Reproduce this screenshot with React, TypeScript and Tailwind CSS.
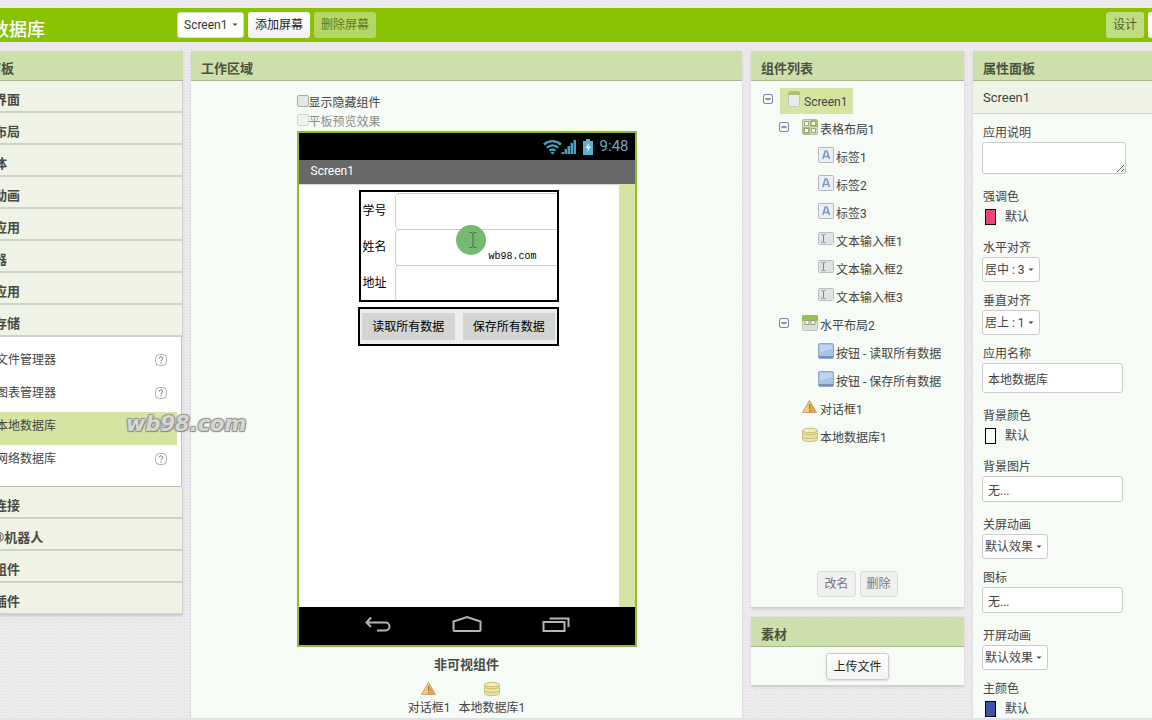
import React, { useState } from "react";

type IconName = "screen" | "table" | "label" | "textbox" | "horizontal" | "button" | "notifier" | "database";

type TreeNode = {
  name: string;
  icon: IconName;
  depth: number;
  branch?: boolean;
};

const TREE: TreeNode[] = [
  { name: "Screen1", icon: "screen", depth: 0, branch: true },
  { name: "表格布局1", icon: "table", depth: 1, branch: true },
  { name: "标签1", icon: "label", depth: 2 },
  { name: "标签2", icon: "label", depth: 2 },
  { name: "标签3", icon: "label", depth: 2 },
  { name: "文本输入框1", icon: "textbox", depth: 2 },
  { name: "文本输入框2", icon: "textbox", depth: 2 },
  { name: "文本输入框3", icon: "textbox", depth: 2 },
  { name: "水平布局2", icon: "horizontal", depth: 1, branch: true },
  { name: "按钮 - 读取所有数据", icon: "button", depth: 2 },
  { name: "按钮 - 保存所有数据", icon: "button", depth: 2 },
  { name: "对话框1", icon: "notifier", depth: 1 },
  { name: "本地数据库1", icon: "database", depth: 1 },
];

const INDENT = ["pl-3", "pl-7", "pl-11"];

const TOP_SECTIONS = ["界面", "布局", "体", "动画", "应用", "器", "应用", "存储"];
const BOTTOM_SECTIONS = ["连接", "®机器人", "组件", "插件"];
const STORAGE_ITEMS = ["文件管理器", "图表管理器", "本地数据库", "网络数据库"];

function ComponentIcon({ name }: { name: IconName }) {
  return (
    <svg className="h-4 w-4 shrink-0" viewBox="0 0 16 16" aria-hidden="true">
      {name === "screen" && (
        <>
          <rect x="2.5" y="0.5" width="11" height="15" rx="1" fill="#e9ebe6" stroke="#c3c8b8" />
          <path d="M2 1.5a1 1 0 0 1 1-1h10a1 1 0 0 1 1 1V4H2z" fill="#a9bf72" />
        </>
      )}
      {name === "table" && (
        <>
          <rect x="0.5" y="0.5" width="15" height="15" rx="1.5" fill="#d5dbc4" stroke="#b0bb93" />
          <path d="M8 1h7v7H8zM1 8h7v7H1z" fill="#a9bd6c" />
          <g fill="#f5f7f0" stroke="#9caa7c">
            <rect x="2.5" y="2.5" width="4" height="4" />
            <rect x="9.5" y="2.5" width="4" height="4" />
            <rect x="2.5" y="9.5" width="4" height="4" />
            <rect x="9.5" y="9.5" width="4" height="4" />
          </g>
        </>
      )}
      {name === "label" && (
        <>
          <rect x="0.5" y="0.5" width="15" height="15" rx="1" fill="#edf1f5" stroke="#b4b7ba" />
          <path d="M4.7 12 7.3 4h1.6l2.5 8M5.7 9.5h4.8" fill="none" stroke="#7d9dc5" strokeWidth="1.7" />
        </>
      )}
      {name === "textbox" && (
        <>
          <rect x="0.5" y="1.5" width="15" height="12" rx="1" fill="#e0e3e4" stroke="#bbbebf" />
          <path d="M3.5 3.5h1.3l.7.6.7-.6h1.3M5.5 4v7M3.5 11.5h1.3l.7-.6.7.6h1.3" fill="none" stroke="#808488" />
        </>
      )}
      {name === "horizontal" && (
        <>
          <rect x="0.5" y="0.5" width="15" height="15" rx="1" fill="#dcdfd9" stroke="#c0c5ba" />
          <path d="M0 1.5A1.5 1.5 0 0 1 1.5 0h13A1.5 1.5 0 0 1 16 1.5V6H0z" fill="#98bd50" />
          <g fill="#f8faf5" stroke="#95a07f">
            <rect x="3" y="5.5" width="4" height="4" />
            <rect x="9" y="5.5" width="4" height="4" />
          </g>
        </>
      )}
      {name === "button" && (
        <>
          <rect x="0.5" y="0.5" width="15" height="15" rx="1.5" fill="#a6c3e9" stroke="#8facd0" />
          <path d="M1 13h14v1.5a.5.5 0 0 1-.5.5h-13a.5.5 0 0 1-.5-.5z" fill="#7590b3" />
          <path d="M2 2h12v4C9 7 5 8 2 10z" fill="#bdd4f2" />
        </>
      )}
      {name === "notifier" && (
        <>
          <path d="M7.5 1.5 14.5 13.5H.5z" fill="#f3ca83" stroke="#cfa268" />
          <path d="M8 2.5 14 13H8z" fill="#e0a54f" />
          <path d="M7.5 5v5M7.5 11v1.5" stroke="#9a7440" />
        </>
      )}
      {name === "database" && (
        <g fill="#ece3a0" stroke="#c8bc78">
          <path d="M.5 10.5v2c0 1.2 3.3 2 7.5 2s7.500-.8 7.500-2v-2z" />
          <path d="M.5 6.5v3c0 1.200 3.300 2 7.500 2s7.500-.8 7.500-2v-3z" />
          <path d="M.5 3.5v2c0 1.300 3.300 2.300 7.500 2.300s7.500-1 7.500-2.300v-2z" />
          <ellipse cx="8" cy="3.5" rx="7.5" ry="2.2" fill="#f4edbb" />
        </g>
      )}
    </svg>
  );
}

function Caret() {
  return (
    <span className="pointer-events-none absolute inset-y-0 right-1.5 flex items-center">
      <svg className="h-1 w-1.5" viewBox="0 0 6 4" aria-hidden="true">
        <path d="M0.5 .5h5L3 3z" fill="#444" />
      </svg>
    </span>
  );
}

function PanelHeader({ children }: { children: React.ReactNode }) {
  return (
    <h2 className="flex h-[30px] items-center border-b border-[#a9b890] bg-[#cddfab] px-2.5 pt-1.5 text-[13px] font-bold text-[#4b5340]">
      {children}
    </h2>
  );
}

function TopBar() {
  return (
    <header className="flex h-[34px] shrink-0 items-center overflow-hidden bg-[#88c200]">
      <h1 className="-ml-[9px] w-[186px] pt-2.5 text-lg font-medium text-white">数据库</h1>
      <div className="flex flex-1 gap-1">
        <div className="relative">
          <select
            aria-label="屏幕"
            className="block h-[26px] w-[67px] appearance-none rounded-[3px] border border-[#d5dfc5] bg-white px-1.5 text-xs text-[#333]"
          >
            <option>Screen1</option>
          </select>
          <Caret />
        </div>
        <button className="h-[26px] rounded-[3px] bg-gradient-to-b from-white to-[#f1f1f1] px-[7px] text-xs text-[#222]">
          添加屏幕
        </button>
        <button disabled className="h-[26px] rounded-[3px] bg-[#b4d765] px-[7px] text-xs text-[#5c7a22]">
          删除屏幕
        </button>
      </div>
      <div className="flex gap-1">
        <button className="h-[26px] rounded-[3px] bg-[#bfdc82] px-[7px] text-xs text-[#4b6420]">设计</button>
        <button aria-label="编程" className="h-[26px] w-1 rounded-l-[3px] bg-white" />
      </div>
    </header>
  );
}

function SectionRow({ title }: { title: string }) {
  return (
    <button className="block h-8 w-full border-r border-b-2 border-[#ced2c8] bg-[#eff3e5] pt-2 text-left text-[13px] font-bold text-[#4a4a46]">
      <span className="-ml-1.5">{title}</span>
    </button>
  );
}

function Palette() {
  const [selected, setSelected] = useState("本地数据库");

  return (
    <section className="-mr-px w-[183px] shrink-0 self-start overflow-hidden shadow-sm">
      <PanelHeader>
        <span className="-ml-[22px]">面板</span>
      </PanelHeader>
      {TOP_SECTIONS.map((title, i) => (
        <SectionRow key={i} title={title} />
      ))}
      <ul className="mr-px border-r border-b border-[#bbbdb8] bg-white pt-[9px] pb-2">
        {STORAGE_ITEMS.map((item) => (
          <li
            key={item}
            className={`mr-1 flex h-[33px] items-center justify-between pr-2.5 pb-1.5 text-xs text-[#444] ${
              item === selected ? "bg-[#d5e4a1]" : ""
            }`}
          >
            <button className="-ml-1" onClick={() => setSelected(item)}>
              {item}
            </button>
            <button aria-label={`${item} 帮助`}>
              <svg className="h-3 w-3" viewBox="0 0 12 12" aria-hidden="true">
                <rect x="0.5" y="0.5" width="11" height="11" rx="4" fill="#fff" stroke="#aaa" />
                <path d="M4.2 4.5c0-2.200 3.500-2.200 3.500 0 0 1.200-1.700 1.200-1.700 2.600M6 8.300v1.200" fill="none" stroke="#666" />
              </svg>
            </button>
          </li>
        ))}
      </ul>
      {BOTTOM_SECTIONS.map((title) => (
        <SectionRow key={title} title={title} />
      ))}
    </section>
  );
}

function StatusBar() {
  return (
    <div className="flex h-[27px] items-center justify-end gap-1.5 bg-black pr-1.5 text-[15px] text-[#6fa9c6]">
      <svg className="h-4 w-[33px]" viewBox="0 0 33 16" aria-hidden="true">
        <g fill="none" stroke="#4a9fc0" strokeWidth="2.4">
          <path d="M1 5.500c5-4.500 12-4.500 17 0" />
          <path d="M3.800 8.700c3.400-3 8-3 11.400 0" />
          <path d="M6.500 11.700c1.800-1.500 4.200-1.500 6 0" />
        </g>
        <path d="m9.500 15.500-2-2.100c1.200-1 2.800-1 4 0z" fill="#4a9fc0" />
        <path d="M18.500 15v-2H21v2zM21.500 15v-5H24v5zM24.500 15V7H27v8zM27.500 15V4H30v11zM30.500 15V1H33v14z" fill="#4a9fc0" />
      </svg>
      <svg className="h-4 w-3" viewBox="0 0 12 16" aria-hidden="true">
        <path d="M4 0h4v2h3v14H1V2h3z" fill="#5ab0d0" />
        <path d="M7 4 3.500 9H6l-1 4 4-5.500H6.500z" fill="#fff" />
      </svg>
      <span>9:48</span>
    </div>
  );
}

function NavigationBar() {
  return (
    <div className="flex h-[38px] items-center justify-between bg-black px-[65px] pb-1">
      <svg className="h-[18px] w-7" viewBox="0 0 28 18" fill="none" stroke="#b5b5b5" strokeWidth="2" aria-hidden="true">
        <path d="M7 2.500 2.500 7.500l4.500 4.500M2.500 7.500h19a4 4 0 0 1 0 8H13" />
      </svg>
      <svg className="h-[18px] w-[30px]" viewBox="0 0 30 18" fill="none" stroke="#b5b5b5" strokeWidth="2" aria-hidden="true">
        <path d="M1.500 15V6.500L15 2l13.500 4.500V15a1 1 0 0 1-1 1h-25a1 1 0 0 1-1-1z" />
      </svg>
      <svg className="h-[18px] w-7" viewBox="0 0 28 18" fill="none" stroke="#b5b5b5" strokeWidth="2" aria-hidden="true">
        <path d="M1.500 7h21v9h-21zM7.500 3.500H26.500V12" />
      </svg>
    </div>
  );
}

function Phone() {
  return (
    <div className="border-2 border-[#92b83c]">
      <StatusBar />
      <div className="flex h-6 items-center bg-[#696969] px-3 pb-0.5 text-xs text-white">Screen1</div>
      <div className="h-[423px] bg-[#d5e3a3] pr-4">
        <div className="relative flex h-full flex-col items-center gap-[5px] border-t border-[#d8d8d8] bg-white pt-[5px] text-xs text-black">
          <div className="h-[112px] w-[200px] overflow-hidden border-2 border-black pt-px">
            {["学号", "姓名", "地址"].map((label) => (
              <label key={label} className="flex h-9 items-center pl-0.5">
                <span className="w-8">{label}</span>
                <input className="-mr-1 h-[37px] min-w-0 flex-1 rounded-[4px] border border-[#ccc] bg-white px-2" />
              </label>
            ))}
          </div>
          <div className="flex w-[201px] gap-2 border-2 border-black bg-[#ededed] px-0.5 py-1">
            <button className="h-[27px] flex-1 bg-[#d3d5d2]">读取所有数据</button>
            <button className="h-[27px] flex-1 bg-[#d3d5d2]">保存所有数据</button>
          </div>

          {/* Pointer highlight */}
          <div className="absolute top-10 left-[157px] flex h-[30px] w-[30px] items-center justify-center rounded-full bg-[#76b970] pl-1">
            <svg className="h-4 w-2" viewBox="0 0 8 16" fill="none" stroke="#48704a" aria-hidden="true">
              <path d="M.5 .5h2.500l1 1 1-1h2.500M4 1v14M.5 15.500h2.500l1-1 1 1h2.500" />
            </svg>
          </div>
          <span className="absolute top-[65px] left-[190px] font-['Liberation_Mono',monospace] text-[10px]">
            wb98.com
          </span>
        </div>
      </div>
      <NavigationBar />
    </div>
  );
}

function Workspace() {
  return (
    <section className="min-w-[400px] flex-1 bg-[#f6fbf5] shadow-sm">
      <PanelHeader>工作区域</PanelHeader>
      <div className="mx-auto w-[340px] pt-[11px] text-xs text-[#444]">
        <label className="flex h-[21px] items-center">
          <input
            type="checkbox"
            className="mb-1 h-3 w-3 appearance-none rounded-[2px] border border-[#a8aaa8] bg-[#e4e7e3] checked:bg-[#88c200]"
          />
          显示隐藏组件
        </label>
        <label className="flex h-[18px] items-center text-[#8c8e8b]">
          <input
            type="checkbox"
            disabled
            className="mb-1 h-3 w-3 appearance-none rounded-[2px] border border-[#d3d5d2] bg-[#f0f2ef]"
          />
          平板预览效果
        </label>
        <Phone />
        <h3 className="pt-2 text-center text-[13px] leading-5 font-bold text-[#4a4a46]">非可视组件</h3>
        <div className="flex justify-center gap-2 pt-1.5">
          <div className="flex flex-col items-center gap-px">
            <ComponentIcon name="notifier" />
            <span className="leading-5">对话框1</span>
          </div>
          <div className="flex flex-col items-center gap-px">
            <ComponentIcon name="database" />
            <span className="leading-5">本地数据库1</span>
          </div>
        </div>
      </div>
    </section>
  );
}

function ComponentTree() {
  const [selected, setSelected] = useState("Screen1");

  return (
    <section className="border-b border-[#d0d3cd] bg-[#f6fbf5] shadow-sm">
      <PanelHeader>组件列表</PanelHeader>
      <ul className="min-h-[490px] pt-1.5">
        {TREE.map((node) => (
          <li key={node.name} className={`flex h-7 items-center ${INDENT[node.depth]}`}>
            <span className="w-[17px] pb-1">
              {node.branch && (
                <button aria-label={`折叠 ${node.name}`} className="block">
                  <svg className="h-2.5 w-2.5" viewBox="0 0 10 10" aria-hidden="true">
                    <rect x="0.5" y="0.5" width="9" height="9" rx="1.5" fill="#f4f6fb" stroke="#7d83b0" />
                    <path d="M2.5 5h5" stroke="#22264f" />
                  </svg>
                </button>
              )}
            </span>
            <button
              onClick={() => setSelected(node.name)}
              className={`flex h-[26px] items-center gap-0.5 px-1.5 text-xs text-[#444] ${
                node.name === selected ? "bg-[#d5e4a1]" : ""
              }`}
            >
              <span className="pb-1">
                <ComponentIcon name={node.icon} />
              </span>
              <span className="pt-0.5">{node.name}</span>
            </button>
          </li>
        ))}
      </ul>
      <div className="flex justify-center gap-1 pb-2.5">
        <button className="h-[26px] rounded-[3px] border border-[#dcdcdc] bg-[#f0f0f0] px-1.5 text-xs text-[#777]">
          改名
        </button>
        <button className="h-[26px] rounded-[3px] border border-[#dcdcdc] bg-[#f0f0f0] px-1.5 text-xs text-[#777]">
          删除
        </button>
      </div>
    </section>
  );
}

function MediaPanel() {
  return (
    <section className="border-b border-[#d0d3cd] bg-[#f6fbf5] shadow-sm">
      <PanelHeader>素材</PanelHeader>
      <div className="flex justify-center pt-1.5 pb-[5px]">
        <button className="h-[27px] rounded-[3px] border border-[#ccc] bg-gradient-to-b from-white to-[#f2f2f2] px-1.5 text-xs text-[#222] shadow-sm">
          上传文件
        </button>
      </div>
    </section>
  );
}

function Field({ label, children }: { label: string; children: React.ReactNode }) {
  return (
    <label className="block">
      <span className="mb-px block h-[18px] pl-px text-xs leading-5">{label}</span>
      {children}
    </label>
  );
}

function SelectField({ label, value, wide }: { label: string; value: string; wide?: boolean }) {
  return (
    <Field label={label}>
      <span className={`relative mb-[9px] block ${wide ? "w-[66px]" : "w-[58px]"}`}>
        <select className="block h-[25px] w-full appearance-none rounded-[3px] border border-[#ccc] bg-white px-0.5 text-xs">
          <option>{value}</option>
        </select>
        <Caret />
      </span>
    </Field>
  );
}

function ColorField({ label, swatch }: { label: string; swatch: string }) {
  return (
    <Field label={label}>
      <button className="mb-2.5 flex h-[22px] items-center gap-[9px] pl-[3px] text-xs">
        <span className={`h-4 w-[11px] border border-black ${swatch}`} />
        默认
      </button>
    </Field>
  );
}

function FileField({ label }: { label: string }) {
  return (
    <Field label={label}>
      <input
        readOnly
        value="无..."
        className="mb-[13px] block h-[26px] w-[141px] rounded-[3px] border border-[#ccc] bg-white px-[5px] text-xs"
      />
    </Field>
  );
}

function Properties() {
  return (
    <section className="w-[179px] shrink-0 bg-[#f6fbf5] text-[#444] shadow-sm">
      <PanelHeader>属性面板</PanelHeader>
      <div className="flex h-[33px] items-center border-b border-[#ced2c8] bg-[#eff3e5] px-2.5 pt-0.5 text-[13px]">
        Screen1
      </div>
      <div className="px-[9px] pt-[9px]">
        <Field label="应用说明">
          <textarea className="mb-[13px] block h-8 w-36 resize rounded-[3px] border border-[#ccc] bg-white px-1.5 text-xs" />
        </Field>
        <ColorField label="强调色" swatch="bg-[#f0427c]" />
        <SelectField label="水平对齐" value="居中 : 3" />
        <SelectField label="垂直对齐" value="居上 : 1" />
        <Field label="应用名称">
          <input
            defaultValue="本地数据库"
            className="mb-[13px] block h-[30px] w-[141px] rounded-[3px] border border-[#ccc] bg-white px-[5px] text-xs"
          />
        </Field>
        <ColorField label="背景颜色" swatch="bg-white" />
        <FileField label="背景图片" />
        <SelectField label="关屏动画" value="默认效果" wide />
        <FileField label="图标" />
        <SelectField label="开屏动画" value="默认效果" wide />
        <ColorField label="主颜色" swatch="bg-[#3f51a8]" />
      </div>
    </section>
  );
}

export default function App() {
  return (
    <div className="relative flex h-screen flex-col overflow-hidden border-b-2 border-[#dfe3e4] bg-[#eceaec] bg-[radial-gradient(#e0dee0_1px,transparent_1px)] bg-[size:3px_3px] pt-2 font-['Roboto','Noto_Sans_CJK_SC',sans-serif]">
      <TopBar />
      <main className="flex min-h-0 flex-1 gap-[9px] overflow-hidden pt-[9px]">
        <Palette />
        <Workspace />
        <div className="flex w-[213px] shrink-0 flex-col gap-[9px]">
          <ComponentTree />
          <MediaPanel />
        </div>
        <Properties />
      </main>

      {/* Watermark */}
      <span className="pointer-events-none absolute top-[412px] left-[126px] font-['DejaVu_Sans',sans-serif] text-[21px] leading-6 font-bold text-[#d4d8d0] italic [text-shadow:1px_1px_1px_#888,-1px_-1px_1px_#999,1px_-1px_1px_#999,-1px_1px_1px_#999]">
        wb98.com
      </span>
    </div>
  );
}
